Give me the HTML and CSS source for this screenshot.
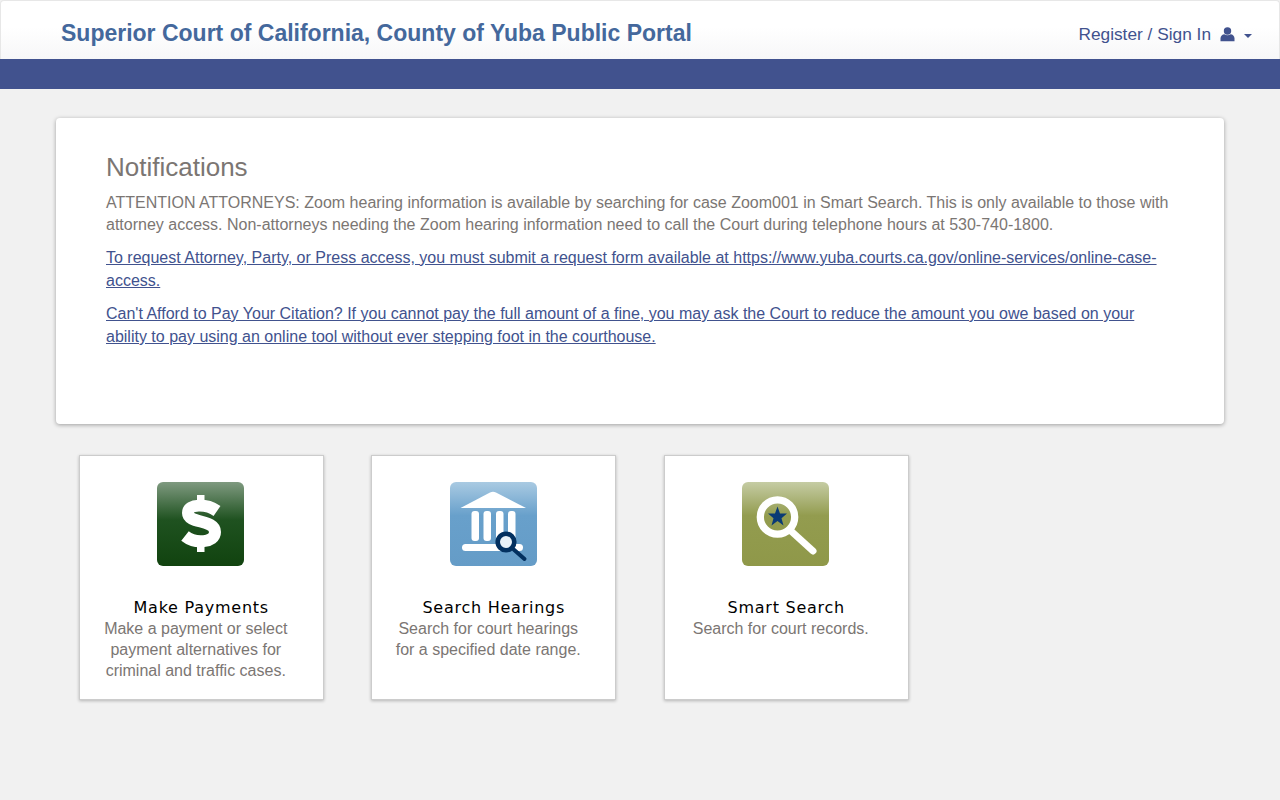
FILE: index.html
```html
<!DOCTYPE html>
<html lang="en">
<head>
    <meta charset="UTF-8">
    <meta name="viewport" content="width=device-width, initial-scale=1.0">
    <title>Superior Court of California, County of Yuba Public Portal</title>
    <link rel="stylesheet" href="styles.css">
</head>
<body>

<header class="site-header">
    <a class="brand" href="#">Superior Court of California, County of Yuba Public Portal</a>
    <a class="user-menu" href="#">
        Register / Sign In
        <svg class="user-icon" viewBox="0 0 15 15" width="15" height="15" aria-hidden="true">
            <circle cx="7.5" cy="4" r="3.7" fill="#41528e"/>
            <path d="M0.5 14.2V11.2C0.5 8.8 2.4 7.4 4.4 7.2C5.2 7.9 6.3 8.3 7.5 8.3S9.8 7.9 10.6 7.2C12.6 7.4 14.5 8.8 14.5 11.2V14.2Z" fill="#41528e"/>
        </svg>
        <span class="caret"></span>
    </a>
</header>
<div class="header-band"></div>

<main class="content">
    <section class="notifications">
        <h2>Notifications</h2>
        <p class="first">ATTENTION ATTORNEYS: Zoom hearing information is available by searching for case Zoom001 in Smart Search. This is only available to those with attorney access. Non-attorneys needing the Zoom hearing information need to call the Court during telephone hours at 530-740-1800.</p>
        <p><a href="#">To request Attorney, Party, or Press access, you must submit a request form available at https://www.yuba.courts.ca.gov/online-services/online-case-access.</a></p>
        <p><a href="#">Can't Afford to Pay Your Citation? If you cannot pay the full amount of a fine, you may ask the Court to reduce the amount you owe based on your ability to pay using an online tool without ever stepping foot in the courthouse.</a></p>
    </section>

    <div class="tiles">
        <a class="tile" href="#">
            <svg class="tile-icon shift-left" viewBox="0 0 87 84" width="87" height="84" aria-hidden="true">
                <defs>
                    <linearGradient id="greenGrad" x1="0" y1="0" x2="0" y2="1">
                        <stop offset="0" stop-color="#7f9a80"/>
                        <stop offset="0.45" stop-color="#1f5220"/>
                        <stop offset="1" stop-color="#11430f"/>
                    </linearGradient>
                </defs>
                <rect width="87" height="84" rx="6" fill="url(#greenGrad)"/>
                <rect x="40" y="13" width="7.500" height="10" fill="#fff"/>
                <rect x="40" y="60" width="7.500" height="10" fill="#fff"/>
                <path d="M60 29C50 22 31 21 31 31C31 42 58 37 58 50C58 61 38 62 28 54" fill="none" stroke="#fff" stroke-width="12"/>
            </svg>
            <h3>Make Payments</h3>
            <p>Make a payment or select<br>payment alternatives for<br>criminal and traffic cases.</p>
        </a>
        <a class="tile" href="#">
            <svg class="tile-icon" viewBox="0 0 87 84" width="87" height="84" aria-hidden="true">
                <defs>
                    <linearGradient id="blueGrad" x1="0" y1="0" x2="0" y2="1">
                        <stop offset="0" stop-color="#a9cae2"/>
                        <stop offset="0.4" stop-color="#68a0cb"/>
                        <stop offset="1" stop-color="#659cc7"/>
                    </linearGradient>
                </defs>
                <rect width="87" height="84" rx="6" fill="url(#blueGrad)"/>
                <path d="M10.500 26L40 10.500C42 9.500 44 9.500 46 10.500L76 26Z" fill="#fff"/>
                <rect x="21.500" y="29" width="7.500" height="30" rx="3" fill="#fff"/>
                <rect x="33.500" y="29" width="7.500" height="30" rx="3" fill="#fff"/>
                <rect x="46" y="29" width="7.500" height="30" rx="3" fill="#fff"/>
                <rect x="58" y="29" width="7.500" height="30" rx="3" fill="#fff"/>
                <rect x="12" y="62" width="61" height="7" rx="3.500" fill="#fff"/>
                <circle cx="56" cy="60" r="8.300" fill="#eaf2f8" stroke="#03305f" stroke-width="4.600"/>
                <line x1="62" y1="66" x2="74.500" y2="77" stroke="#03305f" stroke-width="4" stroke-linecap="round"/>
            </svg>
            <h3>Search Hearings</h3>
            <p>Search for court hearings<br>for a specified date range.</p>
        </a>
        <a class="tile" href="#">
            <svg class="tile-icon shift-left" viewBox="0 0 87 84" width="87" height="84" aria-hidden="true">
                <defs>
                    <linearGradient id="oliveGrad" x1="0" y1="0" x2="0" y2="1">
                        <stop offset="0" stop-color="#c5cca4"/>
                        <stop offset="0.4" stop-color="#939c4f"/>
                        <stop offset="1" stop-color="#8f9849"/>
                    </linearGradient>
                </defs>
                <rect width="87" height="84" rx="6" fill="url(#oliveGrad)"/>
                <circle cx="35.500" cy="35" r="17.200" fill="none" stroke="#fff" stroke-width="7.300"/>
                <line x1="49" y1="49" x2="71" y2="69" stroke="#fff" stroke-width="7" stroke-linecap="round"/>
                <path d="M35.500 24.500L38 31.500H45L39.500 36.200L41.500 43.500L35.500 39L29.500 43.500L31.500 36.200L26 31.500H33Z" fill="#0a3a75"/>
            </svg>
            <h3>Smart Search</h3>
            <p>Search for court records.</p>
        </a>
    </div>
</main>

</body>
</html>
```

FILE: styles.css
```css
* {
    box-sizing: border-box;
}
html, body {
    height: 100%;
}
body {
    margin: 0;
    background-color: #f1f1f1;
    font-family: "Liberation Sans", Arial, sans-serif;
    font-size: 16px;
    color: #7b7673;
}
a {
    text-decoration: none;
}
.site-header {
    display: flex;
    justify-content: space-between;
    align-items: center;
    height: 59px;
    padding: 7px 27px 0 60px;
    background: linear-gradient(to bottom, #ffffff 0%, #ffffff 45%, #f7f7f8 100%);
    border: 1px solid #e7e7e7;
    border-bottom: 0;
    border-radius: 4px 4px 0 0;
}
.brand {
    font-size: 23px;
    font-weight: bold;
    color: #44689c;
}
.user-menu {
    display: flex;
    align-items: center;
    margin-top: 2px;
    font-size: 17.3px;
    color: #41528e;
}
.user-icon {
    margin-left: 9px;
}
.caret {
    width: 0;
    height: 0;
    margin-left: 9px;
    margin-top: 2px;
    border-top: 4px solid #41528e;
    border-left: 4px solid transparent;
    border-right: 4px solid transparent;
}
.header-band {
    height: 30px;
    background-color: #41528e;
}
.content {
    padding: 29px 56px 0;
}
.notifications {
    height: 306px;
    padding: 33px 49px 0 50px;
    background: #fff;
    border-radius: 4px;
    box-shadow: 0 1px 4px rgba(0, 0, 0, 0.35);
}
.notifications h2 {
    margin: 0;
    font-size: 26px;
    font-weight: normal;
    line-height: 32px;
}
.notifications p {
    margin: 10px 0 0;
    line-height: 23px;
}
.notifications p.first {
    margin-top: 9px;
    line-height: 22px;
}
.notifications a {
    color: #41528e;
    text-decoration: underline;
}
.tiles {
    display: flex;
    gap: 47.5px;
    padding: 31px 0 0 22.75px;
}
.tile {
    display: block;
    width: 245px;
    height: 245px;
    padding-top: 26px;
    background: #fff;
    border: 1px solid #ccc;
    box-shadow: 0 1px 3px rgba(0, 0, 0, 0.25);
    text-align: center;
}
.tile-icon {
    display: block;
    margin: 0 auto;
}
.tile-icon.shift-left {
    transform: translateX(-1px);
}
.tile h3 {
    margin: 31px 0 0;
    font-family: "DejaVu Sans", Verdana, sans-serif;
    font-size: 16px;
    font-weight: normal;
    letter-spacing: 0.75px;
    line-height: 21px;
    color: #000;
}
.tile p {
    margin: 0;
    padding-right: 11px;
    line-height: 21px;
    color: #7b7673;
}
```
